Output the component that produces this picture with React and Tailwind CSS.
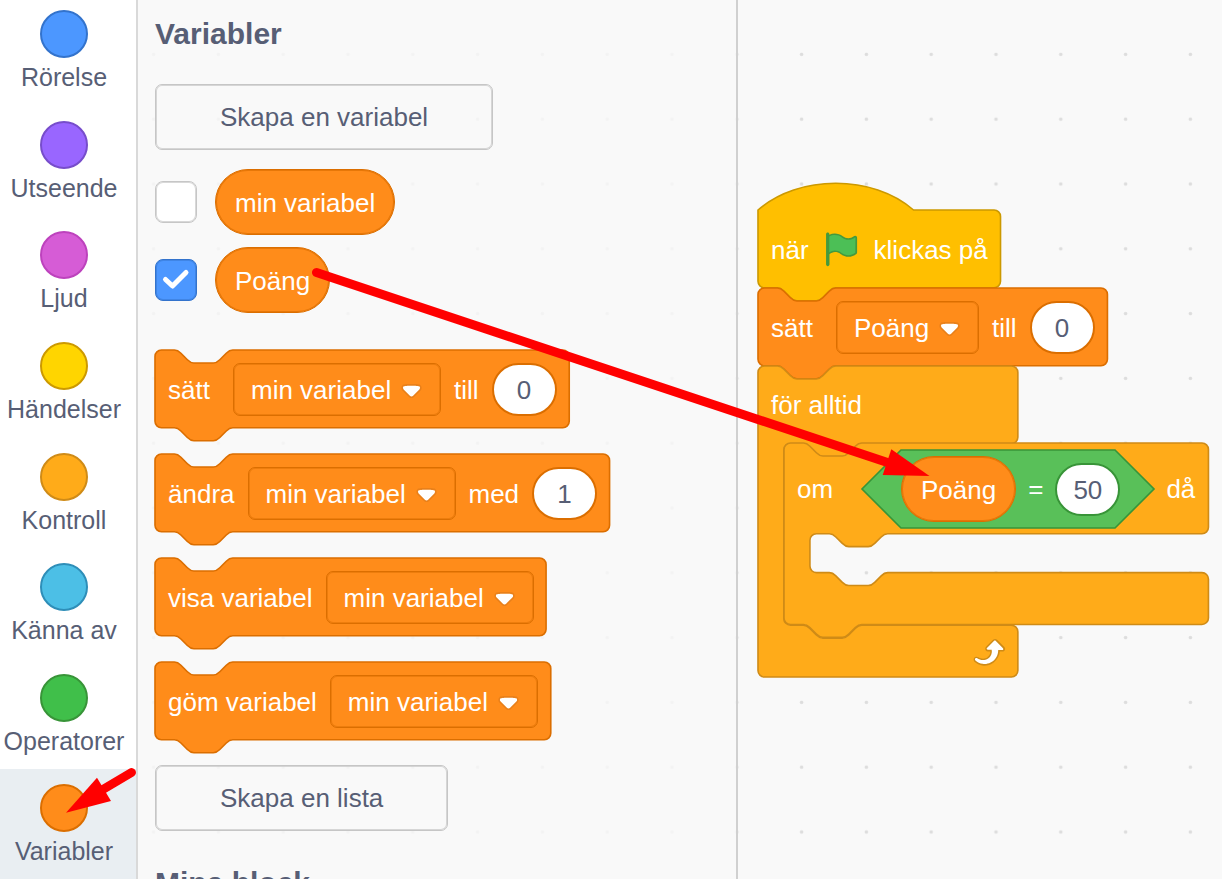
import React from "react";

const UNIT = 1.62;

const DATA = { fill: "#FF8C1A", stroke: "#DB6E00" };
const EVENT = { fill: "#FFBF00", stroke: "#CC9900" };
const CONTROL = { fill: "#FFAB19", stroke: "#CF8B17" };
const OPERATOR = { fill: "#59C059", stroke: "#389438" };

const CATEGORIES = [
  { name: "Rörelse", dot: "bg-[#4C97FF] border-[#3373CC]" },
  { name: "Utseende", dot: "bg-[#9966FF] border-[#774DCB]" },
  { name: "Ljud", dot: "bg-[#D65CD6] border-[#BD42BD]" },
  { name: "Händelser", dot: "bg-[#FFD500] border-[#CC9900]" },
  { name: "Kontroll", dot: "bg-[#FFAB19] border-[#CF8B17]" },
  { name: "Känna av", dot: "bg-[#4CBFE6] border-[#2E8EB8]" },
  { name: "Operatorer", dot: "bg-[#40BF4A] border-[#389438]" },
  { name: "Variabler", dot: "bg-[#FF8C1A] border-[#DB6E00]", selected: true },
];

// Puzzle outlines, in block units
const NOTCH_RIGHT = "c 2,0 3,1 4,2 l 4,4 c 1,1 2,2 4,2 h 12 c 2,0 3,-1 4,-2 l 4,-4 c 1,-1 2,-2 4,-2";
const NOTCH_LEFT = "c -2,0 -3,1 -4,2 l -4,4 c -1,1 -2,2 -4,2 h -12 c -2,0 -3,-1 -4,-2 l -4,-4 c -1,-1 -2,-2 -4,-2";
const TOP = `M 0,4 a 4,4 0 0 1 4,-4 h 8 ${NOTCH_RIGHT}`;
const BOTTOM = `H 48 ${NOTCH_LEFT} H 4 a 4,4 0 0 1 -4,-4 Z`;

const side = (w, h) => `H ${w - 4} a 4,4 0 0 1 4,4 v ${h - 8} a 4,4 0 0 1 -4,4`;
const mouth = (h) => `H 64 ${NOTCH_LEFT} h -8 a 4,4 0 0 0 -4,4 v ${h - 8} a 4,4 0 0 0 4,4 h 8 ${NOTCH_RIGHT}`;

const stackPath = (w) => `${TOP} ${side(w, 48)} ${BOTTOM}`;
const hatPath = (w) => `M 0,0 c 25,-22 71,-22 96,0 ${side(w, 48)} ${BOTTOM}`;
const foreverPath = (w, inner) =>
  `${TOP} ${side(w, 48)} ${mouth(inner)} ${side(w, 32)} H 4 a 4,4 0 0 1 -4,-4 Z`;
const ifPath = (w) => `${TOP} ${side(w, 56)} ${mouth(24)} ${side(w, 32)} ${BOTTOM}`;

function Shape({ d, color }) {
  return (
    <svg aria-hidden="true" className="pointer-events-none absolute inset-0 size-full overflow-visible">
      <path d={d} transform={`scale(${UNIT})`} fill={color.fill} stroke={color.stroke} strokeWidth="1" />
    </svg>
  );
}

function Row({ children, className = "h-[78px]" }) {
  return (
    <div className={`relative flex w-max items-center gap-[13px] px-[13px] pt-[1px] text-[26px] text-white ${className}`}>
      {children}
    </div>
  );
}

function Label({ children, first }) {
  return <span className={`leading-[30px] ${first ? "min-w-[52px]" : ""}`}>{children}</span>;
}

function VariableSelect({ value, label }) {
  return (
    <span className="relative flex">
      <select
        aria-label={label}
        defaultValue={value}
        className="h-[53px] appearance-none rounded-[7px] border border-[#DB6E00] bg-[#FF8C1A] pr-[48px] pl-[17px] text-[26px] leading-[30px] text-white shadow-[inset_0_0_0_1px_#DB6E0080]"
      >
        <option value={value}>{value}</option>
      </select>
      <svg
        aria-hidden="true"
        viewBox="0 0 12.71 8.79"
        className="pointer-events-none absolute top-[21px] right-[19px] h-[14px] w-[21px]"
      >
        <path
          fill="#231f20"
          opacity="0.1"
          d="M12.71,2.44A2.41,2.41,0,0,1,12,4.16L8.08,8.08a2.45,2.45,0,0,1-3.45,0L0.72,4.16A2.42,2.42,0,0,1,0,2.44,2.48,2.48,0,0,1,.71.71C1,0.47,1.43,0,6.36,0S11.75,0.46,12,.71A2.44,2.44,0,0,1,12.71,2.44Z"
        />
        <path
          fill="#fff"
          d="M6.36,7.79a1.43,1.43,0,0,1-1-.42L1.42,3.45a1.44,1.44,0,0,1,0-2c0.56-.56,9.31-0.56,9.87,0a1.44,1.44,0,0,1,0,2L7.37,7.37A1.43,1.43,0,0,1,6.36,7.79Z"
        />
      </svg>
    </span>
  );
}

function ValueInput({ value, label, border = "border-[#DB6E00]" }) {
  return (
    <input
      type="text"
      aria-label={label}
      defaultValue={value}
      className={`h-[53px] w-[65px] rounded-full border-2 bg-white pt-[2px] text-center text-[26px] text-[#575E75] ${border}`}
    />
  );
}

function Reporter({ children }) {
  return (
    <span className="flex h-[66px] items-center rounded-full border border-[#DB6E00] bg-[#FF8C1A] px-[19px] pt-[2px] text-[26px] leading-[30px] text-white shadow-[inset_0_0_0_1px_#DB6E00B0]">
      {children}
    </span>
  );
}

function VariableRow({ name, checked }) {
  const id = `monitor-${name.replace(" ", "-")}`;
  return (
    <div className="flex items-center gap-[18px]">
      <span className="relative flex">
        <input
          id={id}
          type="checkbox"
          defaultChecked={checked}
          className="peer size-[42px] appearance-none rounded-lg border border-[#C6C6C6] bg-white shadow-[inset_0_0_0_1px_#C6C6C6B0] checked:border-[#3373CC] checked:bg-[#4C97FF] checked:shadow-[inset_0_0_0_1px_#3373CC80]"
        />
        <svg
          aria-hidden="true"
          viewBox="0 0 42 42"
          fill="none"
          stroke="#fff"
          strokeWidth="5"
          strokeLinecap="round"
          strokeLinejoin="round"
          className="pointer-events-none absolute inset-0 hidden size-full peer-checked:block"
        >
          <path d="M10.5 20.5 L17.5 27 L31 13.5" />
        </svg>
      </span>
      <label htmlFor={id}>
        <Reporter>{name}</Reporter>
      </label>
    </div>
  );
}

function PaletteButton({ children }) {
  return (
    <button
      type="button"
      className="h-[66px] rounded-[7px] border border-[#C6C6C6] px-16 text-[26px] text-[#575E75] shadow-[inset_0_0_0_1px_#C6C6C6B0]"
    >
      {children}
    </button>
  );
}

function StackBlock({ width, children }) {
  return (
    <div className="relative w-max">
      <Shape d={stackPath(width)} color={DATA} />
      <Row>{children}</Row>
    </div>
  );
}

function FlagIcon() {
  return (
    <svg role="img" aria-label="grön flagga" viewBox="0 0 24 24" className="size-[39px]">
      <path
        fill="#45993D"
        d="M20.8,3.7c-0.4-0.2-0.9-0.1-1.2,0.2c-2,1.6-4.8,1.6-6.8,0c-2.3-1.9-5.6-2.3-8.3-1v-0.4c0-0.6-0.5-1-1-1s-1,0.4-1,1v18.8c0,0.5,0.5,1,1,1h0.1c0.5,0,1-0.5,1-1v-6.4c1-0.7,2.1-1.2,3.4-1.3c1.2,0,2.4,0.4,3.4,1.2c2.9,2.3,7,2.3,9.8,0c0.3-0.2,0.4-0.5,0.4-0.9V4.7C21.6,4.2,21.3,3.8,20.8,3.7z"
      />
      <path
        fill="#4CBF56"
        d="M20.6,4.8l-0.1,9.1v0.1c-2.5,2-6.1,2-8.6,0c-1.1-0.9-2.5-1.4-4-1.4c-1.2,0.1-2.3,0.5-3.4,1.1V4c2.5-1.4,5.5-1.1,7.7,0.6c2.4,1.9,5.7,1.9,8.1,0h0.1C20.5,4.6,20.6,4.7,20.6,4.8z"
      />
    </svg>
  );
}

function RepeatIcon() {
  return (
    <svg aria-hidden="true" viewBox="0 0 24 24" className="size-[39px]">
      <path
        fill="#CF8B17"
        d="M23.3,11c-0.3,0.6-0.9,1-1.5,1h-1.6c-0.1,1.3-0.5,2.5-1.1,3.6c-0.9,1.7-2.3,3.2-4.1,4.1c-1.7,0.9-3.6,1.2-5.5,0.9c-1.8-0.3-3.5-1.1-4.9-2.3c-0.7-0.7-0.7-1.9,0-2.6c0.6-0.6,1.6-0.7,2.3-0.2H7c0.9,0.6,1.9,0.9,2.9,0.9s1.9-0.3,2.7-0.9c1.1-0.8,1.8-2.1,1.8-3.5h-1.5c-0.9,0-1.7-0.7-1.7-1.7c0-0.4,0.2-0.9,0.5-1.2l4.4-4.4c0.7-0.6,1.7-0.6,2.4,0L23,9.2C23.5,9.7,23.6,10.4,23.3,11z"
      />
      <path
        fill="#fff"
        d="M21.8,11h-2.6c0,1.5-0.3,2.9-1,4.2c-0.8,1.6-2.1,2.8-3.7,3.6c-1.5,0.8-3.3,1.1-4.9,0.8c-1.6-0.2-3.2-1-4.4-2.1c-0.4-0.3-0.4-0.9-0.1-1.2c0.3-0.4,0.9-0.4,1.2-0.1l0,0c1,0.7,2.2,1.1,3.4,1.1s2.3-0.3,3.3-1c0.9-0.6,1.6-1.5,2-2.6c0.3-0.9,0.4-1.8,0.2-2.8h-2.4c-0.4,0-0.7-0.3-0.7-0.7c0-0.2,0.1-0.3,0.2-0.4l4.4-4.4c0.3-0.3,0.7-0.3,0.9,0L22,9.8c0.3,0.3,0.4,0.6,0.3,0.9S22,11,21.8,11z"
      />
    </svg>
  );
}

function EqualsBlock() {
  return (
    <div className="relative flex h-[78px] items-center pr-[33px] pl-[39px]">
      <svg aria-hidden="true" className="pointer-events-none absolute inset-0 size-full overflow-visible">
        <path
          d="M39 0 H253 L292 39 L253 78 H39 L0 39 Z"
          fill={OPERATOR.fill}
          stroke={OPERATOR.stroke}
          strokeWidth={UNIT}
        />
      </svg>
      <div className="relative flex items-center gap-3">
        <Reporter>Poäng</Reporter>
        <Label>=</Label>
        <ValueInput value="50" label="Jämförelsevärde" border="border-[#389438]" />
      </div>
    </div>
  );
}

function IfBlock() {
  return (
    <div className="relative w-max">
      <Shape d={ifPath(262)} color={CONTROL} />
      <Row className="h-[91px]">
        <Label first>om</Label>
        <EqualsBlock />
        <Label>då</Label>
      </Row>
      <div className="h-[91px]" />
    </div>
  );
}

function ForeverBlock() {
  return (
    <div className="relative w-[260px]">
      <Shape d={foreverPath(160.4, 112)} color={CONTROL} />
      <Row className="h-[77px]">
        <Label>för alltid</Label>
      </Row>
      <div className="pl-[26px]">
        <IfBlock />
      </div>
      <div className="relative flex h-[52px] items-center justify-end pr-3">
        <RepeatIcon />
      </div>
    </div>
  );
}

function Script() {
  return (
    <div className="flex flex-col items-start">
      <div className="relative w-max">
        <Shape d={hatPath(149.7)} color={EVENT} />
        <Row>
          <Label>när</Label>
          <FlagIcon />
          <Label>klickas på</Label>
        </Row>
      </div>
      <StackBlock width={215.7}>
        <Label first>sätt</Label>
        <VariableSelect value="Poäng" label="Variabel att sätta" />
        <Label>till</Label>
        <ValueInput value="0" label="Nytt värde" />
      </StackBlock>
      <ForeverBlock />
    </div>
  );
}

function CategoryMenu() {
  return (
    <nav className="w-[138px] shrink-0 border-r-2 border-[#D9D9D9] bg-white">
      <div className="-mt-[5px] grid h-[calc(100vh+6px)] auto-rows-fr">
        {CATEGORIES.map((c) => (
          <button
            key={c.name}
            type="button"
            className={`flex flex-col items-center gap-1 pt-[15px] pr-2 text-[25px] leading-[30px] whitespace-nowrap text-[#575E75] ${
              c.selected ? "bg-[#E9EEF2]" : ""
            }`}
          >
            <span className={`size-12 rounded-full border-2 ${c.dot}`} />
            <span>{c.name}</span>
          </button>
        ))}
      </div>
    </nav>
  );
}

function Palette() {
  return (
    <section className="relative w-[600px] shrink-0 border-r-2 border-[#D0D0D0] bg-[#F9F9F9]/80 pt-4 pl-[17px]">
      <h2 className="text-[30px] leading-9 font-bold text-[#575E75]">Variabler</h2>
      <div className="mt-8">
        <PaletteButton>Skapa en variabel</PaletteButton>
      </div>
      <div className="mt-[19px] flex flex-col gap-3">
        <VariableRow name="min variabel" />
        <VariableRow name="Poäng" checked />
      </div>
      <div className="mt-[37px] flex flex-col gap-[26px]">
        <StackBlock width={255.7}>
          <Label first>sätt</Label>
          <VariableSelect value="min variabel" label="Variabel att sätta" />
          <Label>till</Label>
          <ValueInput value="0" label="Nytt värde" />
        </StackBlock>
        <StackBlock width={280.6}>
          <Label first>ändra</Label>
          <VariableSelect value="min variabel" label="Variabel att ändra" />
          <Label>med</Label>
          <ValueInput value="1" label="Ändring" />
        </StackBlock>
        <StackBlock width={241.4}>
          <Label>visa variabel</Label>
          <VariableSelect value="min variabel" label="Variabel att visa" />
        </StackBlock>
        <StackBlock width={244.3}>
          <Label>göm variabel</Label>
          <VariableSelect value="min variabel" label="Variabel att gömma" />
        </StackBlock>
      </div>
      <div className="mt-[25px]">
        <PaletteButton>Skapa en lista</PaletteButton>
      </div>
      <h2 className="mt-[34px] text-[30px] leading-9 font-bold text-[#575E75]">Mina block</h2>
    </section>
  );
}

function DotGrid() {
  return (
    <svg aria-hidden="true" className="pointer-events-none absolute inset-0 size-full">
      <defs>
        <pattern id="dots" x="-16.8" y="22" width="64.8" height="64.8" patternUnits="userSpaceOnUse">
          <circle cx="32.4" cy="32.4" r="1.8" fill="#DDDDDD" />
        </pattern>
      </defs>
      <rect width="100%" height="100%" fill="url(#dots)" />
    </svg>
  );
}

function Arrows() {
  return (
    <svg aria-hidden="true" className="pointer-events-none absolute inset-0 size-full">
      <g stroke="#FF0000" strokeWidth="9" strokeLinecap="round">
        <path d="M316.5 272.5 L889 463" />
        <path d="M131.5 772.5 L102 790" />
      </g>
      <g fill="#FF0000">
        <path d="M929.5 476 L891.3 449.3 L882.7 475 Z" />
        <path d="M66 812.7 L97 777.7 L111 801 Z" />
      </g>
    </svg>
  );
}

export default function App() {
  return (
    <div className="relative flex h-screen overflow-hidden bg-[#F9F9F9] font-['Liberation_Sans',Arial,sans-serif]">
      <CategoryMenu />
      <main className="relative flex min-w-0 flex-1">
        <DotGrid />
        <Palette />
        <section className="relative min-w-0 flex-1 pt-[210px] pl-5">
          <Script />
        </section>
      </main>
      <Arrows />
    </div>
  );
}
